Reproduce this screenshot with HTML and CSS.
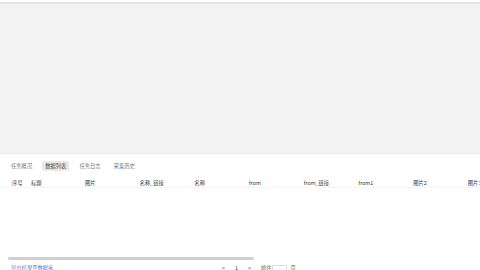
FILE: index.html
```html
<!DOCTYPE html>
<html lang="zh-CN">
  <head>
    <meta charset="UTF-8" />
    <meta name="viewport" content="width=device-width, initial-scale=1.0" />
    <title>任务详情</title>
    <link rel="stylesheet" href="styles.css">
  </head>
  <body>
    <div class="preview"></div>
    <div class="panel">
      <div class="tabs">
        <span class="tab">任务概况</span>
        <span class="tab active">数据列表</span>
        <span class="tab">任务日志</span>
        <span class="tab">采集历史</span>
      </div>
      <div class="table">
        <div class="thead">
          <span class="col no">序号</span>
          <span class="col title">标题</span>
          <span class="col">图片</span>
          <span class="col">名称_链接</span>
          <span class="col">名称</span>
          <span class="col">from</span>
          <span class="col">from_链接</span>
          <span class="col">from1</span>
          <span class="col">图片2</span>
          <span class="col">图片3</span>
        </div>
        <div class="tbody"></div>
        <div class="scrollbar"><div class="thumb"></div></div>
      </div>
      <div class="footer">
        <a class="export">导出结果至数据库</a>
        <div class="pager">
          <span class="arrow">&lt;</span>
          <span class="page">1</span>
          <span class="arrow">&gt;</span>
          <span class="goto">前往</span>
          <span class="input"></span>
          <span class="unit">页</span>
        </div>
      </div>
    </div>
  </body>
</html>
```

FILE: styles.css
```css
* {
  margin: 0;
  padding: 0;
  box-sizing: border-box;
}
body {
  width: 480px;
  height: 270px;
  overflow: hidden;
  background-color: #fff;
  font-family: "Noto Sans CJK SC", "Noto Sans", sans-serif;
  font-size: 5.3px;
  color: #333;
}
.preview {
  height: 152px;
  margin-top: 2px;
  border-top: 2px solid #e6e6e6;
  background-color: #f3f3f3;
  border-bottom: 1px solid #ececec;
}
.panel {
  background-color: #fff;
}
.tabs {
  display: flex;
  align-items: center;
  gap: 7px;
  padding: 5px 0 0 8px;
  height: 19px;
}
.tab {
  color: #777;
  padding: 2px 3px;
  line-height: 6px;
  border-radius: 2px;
}
.tab.active {
  background-color: #e9e9e9;
  color: #444;
}
.table {
  overflow: hidden;
}
.thead {
  display: flex;
  align-items: center;
  height: 10px;
  margin-top: 5px;
  padding-left: 12px;
  white-space: nowrap;
  border-bottom: 1px solid #f6f6f6;
}
.col {
  flex: 0 0 54.7px;
  color: #333;
}
.col.no {
  flex-basis: 19px;
}
.col.title {
  flex-basis: 54px;
}
.tbody {
  height: 69px;
}
.scrollbar {
  height: 4px;
  padding: 0 0 0 8px;
}
.thumb {
  width: 246px;
  height: 3px;
  border-radius: 2px;
  background-color: #cfcfcf;
}
.footer {
  display: flex;
  align-items: center;
  height: 10px;
  padding: 3px 0 0 11px;
}
.export {
  color: #4a7fd8;
  width: 211px;
}
.pager {
  display: flex;
  align-items: center;
  color: #666;
}
.arrow {
  margin-right: 10px;
}
.page {
  color: #333;
  margin-right: 10px;
}
.goto {
  margin-right: 1px;
}
.input {
  width: 15px;
  height: 6px;
  border: 1px solid #ddd;
  border-radius: 1px;
  margin-right: 3px;
}
```
